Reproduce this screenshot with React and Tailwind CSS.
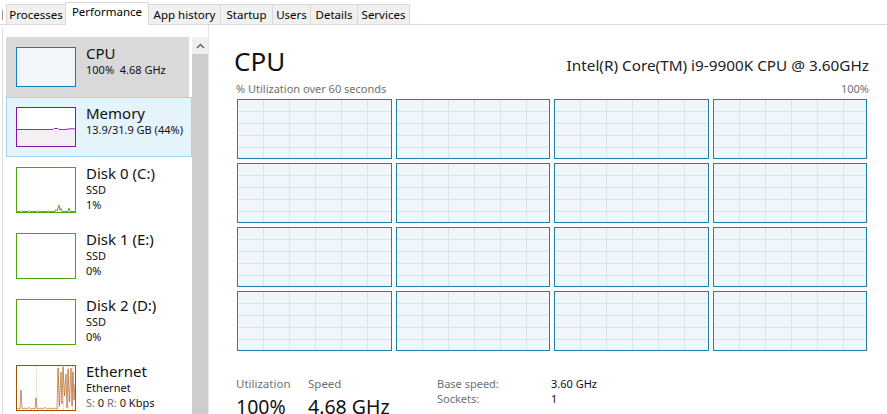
import React from "react";

const tabs = [
  { label: "Processes", w: "w-[60px]" },
  { label: "Performance", w: "w-[84px]", active: true },
  { label: "App history", w: "w-[73px]" },
  { label: "Startup", w: "w-[53px]" },
  { label: "Users", w: "w-[39px]" },
  { label: "Details", w: "w-[48px]" },
  { label: "Services", w: "w-[53px]" },
];

function TabBar() {
  return (
    <div className="h-[25px] flex items-end border-b border-[#d9d9d9] pl-[6px] relative">
      <div className="absolute left-[2px] top-[10px] w-px h-[10px] bg-[#9a9a9a]" />
      {tabs.map((t, i) =>
        t.active ? (
          <div
            key={t.label}
            className={`${t.w} h-[23px] -mb-px -ml-px bg-white border border-b-0 border-[#d9d9d9] relative z-10 flex justify-center pt-[1px] text-[11.5px] leading-[16px] text-black`}
          >
            {t.label}
          </div>
        ) : (
          <div
            key={t.label}
            className={`${t.w} h-[20px] ${i === 0 ? "" : "-ml-px"} bg-[#f0f0f0] border border-b-0 border-[#d9d9d9] flex items-center justify-center text-[11.5px] leading-[16px] text-black`}
          >
            {t.label}
          </div>
        )
      )}
    </div>
  );
}

function CpuThumb() {
  return <div className="w-[60px] h-[40px] border border-[#117dbb] bg-[#f1f6fa] shrink-0" />;
}

function MemThumb() {
  return (
    <div className="w-[60px] h-[40px] border border-[#8b12ae] bg-white shrink-0">
      <svg width="58" height="38" viewBox="0 0 58 38" className="block">
        <path
          d="M0 21.5 L36 21.5 L37 20.5 L41 20.5 L42 21.5 L50 21.5 L51 20.8 L58 20.8 L58 38 L0 38 Z"
          fill="#f4eff5"
        />
        <path
          d="M0 21.5 L36 21.5 L37 20.5 L41 20.5 L42 21.5 L50 21.5 L51 20.8 L58 20.8"
          fill="none"
          stroke="#8b12ae"
          strokeWidth="0.9"
        />
      </svg>
    </div>
  );
}

function DiskThumb({ spikes }) {
  return (
    <div className="w-[60px] h-[46px] border border-[#4da60c] bg-white shrink-0">
      <svg width="58" height="44" viewBox="0 0 58 44" className="block">
        {spikes && (
          <path
            d="M0 43.5 L3 43.5 L4 42.5 L5 43.5 L11 43.5 L12 42.5 L13 43.5 L20 43.5 L21 42.5 L22 43.5 L30 43.5 L31 42.8 L33 43.5 L38 43.5 L39 41.5 L40 42.5 L42 37 L43 42 L44 40.5 L45 43.5 L51 43.5 L52 40 L53 43.5 L58 43.5"
            fill="#e8f3df"
            stroke="#4da60c"
            strokeWidth="0.9"
          />
        )}
      </svg>
    </div>
  );
}

function EthThumb() {
  return (
    <div className="w-[60px] h-[46px] border border-[#a74f01] bg-white shrink-0">
      <svg width="58" height="44" viewBox="0 0 58 44" className="block">
        <line x1="19.5" y1="0" x2="19.5" y2="44" stroke="#c98a55" strokeDasharray="1 1.5" strokeWidth="0.6" />
        <line x1="41.5" y1="0" x2="41.5" y2="44" stroke="#c98a55" strokeDasharray="1 1.5" strokeWidth="0.6" />
        <line x1="46.5" y1="0" x2="46.5" y2="44" stroke="#c98a55" strokeDasharray="1 1.5" strokeWidth="0.6" />
        <line x1="51.5" y1="0" x2="51.5" y2="44" stroke="#c98a55" strokeDasharray="1 1.5" strokeWidth="0.6" />
        <line x1="55.5" y1="0" x2="55.5" y2="44" stroke="#c98a55" strokeDasharray="1 1.5" strokeWidth="0.6" />
        <path
          d="M0 43 L2 42 L3 43 L4 24 L5 42 L6 43 L8 42 L10 43 L12 41.5 L14 43 L17 42 L18 43 L19 32 L20 42 L21 43 L23 42 L25 43 L28 41.5 L30 43 L33 42 L35 43 L38 42 L40 43 L41 2 L42.5 40 L44 6 L45 38 L46 1 L47.5 30 L49 8 L50 42 L51 3 L52.5 36 L54 2 L55 40 L56 6 L57 34 L58 18"
          fill="none"
          stroke="#a74f01"
          strokeWidth="0.6"
        />
      </svg>
    </div>
  );
}

function Item({ thumb, name, lines, variant, h }) {
  const base = "flex items-start shrink-0 pl-[9px] pt-[9px] border";
  let cls = base + " border-transparent";
  if (variant === "selected") cls = base + " border-transparent bg-[#d9d9d9] mr-[3px]";
  if (variant === "hover") cls = base + " border-[#a9d3f2] bg-[#e5f3fb]";
  return (
    <div className={`${cls} ${h}`}>
      {thumb}
      <div className="ml-[10px] -mt-[3px] flex flex-col">
        <div className="text-[15px] leading-[18px] text-[#111]">{name}</div>
        {lines.map((l, i) => (
          <div key={i} className="text-[11px] leading-[15px] text-[#111] whitespace-pre">
            {l}
          </div>
        ))}
      </div>
    </div>
  );
}

function Sidebar() {
  return (
    <div className="w-[209px] shrink-0 flex h-full overflow-hidden">
      <div className="w-[6px] shrink-0 relative">
        <div className="absolute left-[2px] top-[3px] bottom-0 w-px bg-[#dcdcdc]" />
      </div>
      <div className="w-[186px] shrink-0 pt-[12px] flex flex-col">
        <Item thumb={<CpuThumb />} name="CPU" lines={["100%  4.68 GHz"]} variant="selected" h="h-[60px]" />
        <Item thumb={<MemThumb />} name="Memory" lines={["13.9/31.9 GB (44%)"]} variant="hover" h="h-[60px]" />
        <Item thumb={<DiskThumb spikes />} name="Disk 0 (C:)" lines={["SSD", "1%"]} h="h-[66px]" />
        <Item thumb={<DiskThumb />} name="Disk 1 (E:)" lines={["SSD", "0%"]} h="h-[66px]" />
        <Item thumb={<DiskThumb />} name="Disk 2 (D:)" lines={["SSD", "0%"]} h="h-[66px]" />
        <Item
          thumb={<EthThumb />}
          name="Ethernet"
          lines={[
            "Ethernet",
            <span key="s">
              <span className="text-[#707070]">S:</span> 0 <span className="text-[#707070]">R:</span> 0 Kbps
            </span>,
          ]}
          h="h-[66px]"
        />
      </div>
      <div className="w-[16px] shrink-0 pt-[12px] flex flex-col border-r border-[#e6e6e6] box-content">
        <div className="h-[17px] bg-[#f0f0f0] flex items-center justify-center">
          <svg width="9" height="6" viewBox="0 0 9 6">
            <path d="M1 5 L4.5 1.5 L8 5" fill="none" stroke="#606060" strokeWidth="1.4" />
          </svg>
        </div>
        <div className="flex-1 bg-[#cdcdcd]" />
      </div>
    </div>
  );
}

function Graph() {
  return (
    <div className="h-[60px] border border-[#1f80ac] bg-[#f1f6fa] [background-image:linear-gradient(to_right,transparent_25px,#d5e6f1_25px),linear-gradient(to_bottom,transparent_11px,#d5e6f1_11px)] [background-size:26px_100%,100%_12px]" />
  );
}

function Main() {
  return (
    <div className="flex-1 pl-[28px] pr-[18px] pt-[21px]">
      <div className="flex justify-between items-baseline h-[30px]">
        <div className="text-[26px] leading-[30px] text-[#111] -ml-[3px]">CPU</div>
        <div className="text-[15.3px] leading-[18px] text-[#222]">Intel(R) Core(TM) i9-9900K CPU @ 3.60GHz</div>
      </div>
      <div className="mt-[6px] flex justify-between text-[11px] leading-[14px] text-[#707070]">
        <span className="-ml-px">% Utilization over 60 seconds</span>
        <span>100%</span>
      </div>
      <div className="mt-[3px] w-[630px] grid grid-cols-4 gap-[4px]">
        {Array.from({ length: 16 }).map((_, i) => (
          <Graph key={i} />
        ))}
      </div>
      <div className="mt-[25px] flex items-start">
        <div className="w-[72px] -ml-px">
          <div className="text-[11.5px] leading-[16px] text-[#707070]">Utilization</div>
          <div className="mt-[2px] text-[19.5px] leading-[26px] text-[#111]">100%</div>
        </div>
        <div className="w-[129px]">
          <div className="text-[11.5px] leading-[16px] text-[#707070]">Speed</div>
          <div className="mt-[2px] text-[19.5px] leading-[26px] text-[#111]">4.68 GHz</div>
        </div>
        <div className="grid grid-cols-[114px_auto] text-[11px] leading-[15px]">
          <div className="text-[#707070]">Base speed:</div>
          <div className="text-[#111]">3.60 GHz</div>
          <div className="text-[#707070]">Sockets:</div>
          <div className="text-[#111]">1</div>
        </div>
      </div>
    </div>
  );
}

export default function App() {
  return (
    <div className="w-[887px] h-[414px] overflow-hidden bg-white font-['Noto_Sans',sans-serif] text-black">
      <TabBar />
      <div className="flex h-[389px]">
        <Sidebar />
        <Main />
      </div>
    </div>
  );
}
